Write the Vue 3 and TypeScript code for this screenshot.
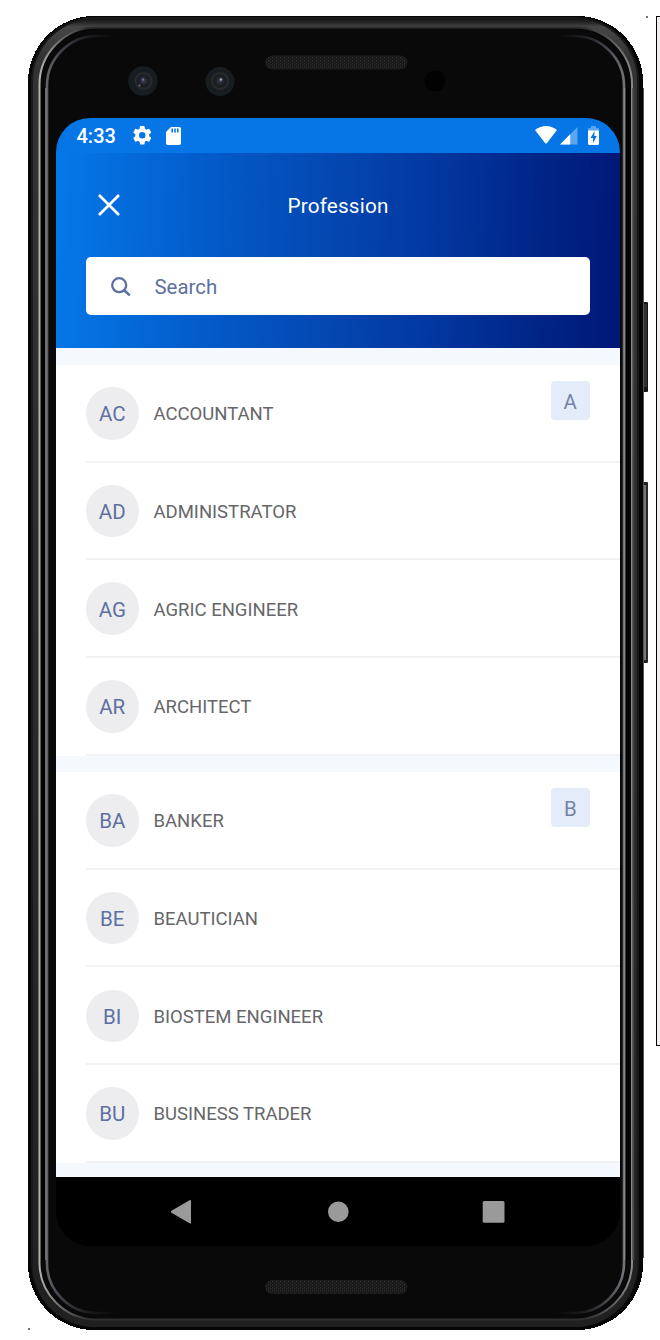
<script setup lang="ts">
interface Item { code: string; name: string }
interface Section { letter: string; items: Item[] }

const toItems = (names: string[]): Item[] => names.map((name) => ({ code: name.slice(0, 2), name }))

const sections: Section[] = [
  { letter: 'A', items: toItems(['ACCOUNTANT', 'ADMINISTRATOR', 'AGRIC ENGINEER', 'ARCHITECT']) },
  { letter: 'B', items: toItems(['BANKER', 'BEAUTICIAN', 'BIOSTEM ENGINEER', 'BUSINESS TRADER']) },
]
</script>

<template>
  <main class="stage">
    <svg class="device" width="660" height="1340" viewBox="0 0 660 1340" aria-hidden="true">
      <defs>
        <linearGradient id="outerGlow" gradientUnits="userSpaceOnUse" x1="39" y1="0" x2="633" y2="0">
          <stop offset="0" stop-color="#b4b4b2" /><stop offset="0.03" stop-color="#757573" /><stop offset="0.08" stop-color="#303030" />
          <stop offset="0.92" stop-color="#303030" /><stop offset="0.97" stop-color="#606060" /><stop offset="1" stop-color="#8c8c8c" />
        </linearGradient>
        <linearGradient id="innerGlow" gradientUnits="userSpaceOnUse" x1="45" y1="0" x2="626" y2="0">
          <stop offset="0" stop-color="#66666b" /><stop offset="0.03" stop-color="#404048" /><stop offset="0.07" stop-color="#1e1e23" /><stop offset="0.12" stop-color="#090909" />
          <stop offset="0.88" stop-color="#090909" /><stop offset="0.93" stop-color="#1e1e23" /><stop offset="0.97" stop-color="#484850" /><stop offset="1" stop-color="#77777c" />
        </linearGradient>
        <radialGradient id="lens">
          <stop offset="0" stop-color="#45465a" /><stop offset="0.25" stop-color="#292b36" /><stop offset="0.6" stop-color="#1a1b1e" />
          <stop offset="0.85" stop-color="#2b2d2f" /><stop offset="1" stop-color="#171b1f" />
        </radialGradient>
        <linearGradient id="rail" x1="0" y1="0" x2="0" y2="1">
          <stop offset="0" stop-color="#151515" /><stop offset="0.003" stop-color="#292929" /><stop offset="0.006" stop-color="#464646" />
          <stop offset="0.03" stop-color="#333" /><stop offset="0.5" stop-color="#2b2b2b" /><stop offset="1" stop-color="#202020" />
        </linearGradient>
        <pattern id="mesh" width="4" height="3" patternUnits="userSpaceOnUse">
          <rect width="4" height="3" fill="#151515" /><rect x="0" width="1.2" height="1.4" fill="#343434" />
          <rect x="2" y="1.4" width="1.2" height="1.4" fill="#303030" />
        </pattern>
      </defs>

      <rect x="656" y="16" width="4" height="1030" fill="#000" />
      <rect x="657" y="17" width="3" height="1028" fill="#f2f0f0" />
      <rect x="646" y="16" width="2" height="2" fill="#777" />
      <rect x="28" y="1328" width="2" height="2" fill="#777" />

      <rect x="641" y="302" width="7" height="90" rx="1" fill="#151515" />
      <rect x="643" y="304" width="4" height="83" fill="#303030" />
      <rect x="641" y="482" width="7" height="181" rx="1" fill="#202020" />
      <rect x="644" y="485" width="2" height="175" fill="#777" />
      <rect x="646.5" y="484" width="1" height="178" fill="#333" />

      <g shape-rendering="crispEdges"><rect x="28" y="16" width="615" height="1314" rx="66" fill="#060606" /></g>
      <path d="M643.5 88V1258" stroke="#555" stroke-width="1" />
      <rect x="31" y="17" width="608" height="1310" rx="64" fill="#181818" />
      <rect x="33" y="19" width="604" height="1308" rx="62" fill="url(#rail)" />
      <rect x="39.5" y="27.5" width="592.5" height="1292" rx="57" fill="#060606" stroke="url(#outerGlow)" stroke-width="2" />
      <rect x="41" y="29" width="589.5" height="1289" rx="56" fill="#090909" />
      <path d="M43 88V1260M627.5 88V1260" stroke="#020202" stroke-width="3" />
      <rect x="47" y="36" width="577" height="1277" rx="50" fill="#090909" stroke="url(#innerGlow)" stroke-width="2.600" />
      <path d="M45.800 88V1260M624.700 88V1260" stroke="#8c8c91" stroke-width="1" />
      <path d="M633.300 88V1260" stroke="#444" stroke-width="2" />

      <circle cx="143" cy="81" r="14.700" fill="#171d21" />
      <circle cx="143.500" cy="81" r="9.500" fill="url(#lens)" />
      <circle cx="143" cy="79.500" r="1.200" fill="#6f7194" /><circle cx="139.500" cy="85.500" r="1" fill="#777064" />
      <circle cx="220" cy="81.500" r="14.500" fill="#171d21" />
      <circle cx="220" cy="81" r="9.500" fill="url(#lens)" />
      <circle cx="221" cy="79.500" r="1.300" fill="#a0a3ac" />
      <circle cx="435" cy="81" r="10.500" fill="#020203" />
      <rect x="265.500" y="56" width="141.500" height="13" rx="6.500" fill="url(#mesh)" stroke="#1c1c1c" />
      <rect x="265.500" y="1280.500" width="141.500" height="13" rx="6.500" fill="url(#mesh)" stroke="#1c1c1c" />
    </svg>

    <div class="screen">
      <div class="status">
        <span class="clock">4:33</span>
        <svg class="gear" width="18.500" height="18.500" viewBox="2 2 20 20"><path fill="#fff" d="M19.43 12.98a7.8 7.8 0 0 0 0-1.96l2.11-1.65c.19-.15.24-.42.12-.64l-2-3.46c-.12-.22-.39-.3-.61-.22l-2.49 1a7.300 7.300 0 0 0-1.690-.98l-.38-2.650A.490.490 0 0 0 14 2h-4c-.25 0-.46.180-.49.420l-.38 2.650c-.61.250-1.170.590-1.690.980l-2.490-1c-.230-.090-.490 0-.610.220l-2 3.460c-.130.220-.070.490.120.640l2.110 1.650a7.900 7.900 0 0 0 0 1.960l-2.110 1.650c-.190.150-.240.420-.120.640l2 3.460c.120.220.390.300.610.220l2.490-1c.520.400 1.080.730 1.690.980l.380 2.650c.030.240.240.420.490.420h4c.250 0 .460-.180.490-.420l.380-2.650c.610-.250 1.170-.590 1.690-.980l2.490 1c.230.090.490 0 .610-.220l2-3.460c.120-.220.070-.490-.120-.640zM12 15.500a3.500 3.500 0 1 1 0-7 3.500 3.500 0 0 1 0 7z" /></svg>
        <svg class="card" width="15" height="18" viewBox="0 0 15 18"><path fill="#fff" d="M5 0H13.200Q15 0 15 1.800V16.200Q15 18 13.200 18H1.800Q0 18 0 16.200V5Z" /><path d="M6.200 1.500V5.500M9 1.500V5.500M11.800 1.500V5.500" stroke="#0675e6" stroke-width="1.600" /></svg>
        <span class="spacer"></span>
        <svg class="wifi" width="22" height="18" viewBox="0 0 22 18"><path fill="#fff" d="M0 4Q11 -4 22 4L12 17Q11 18 10 17Z" /></svg>
        <svg class="signal" width="17.500" height="17.500" viewBox="0 0 18 18"><path fill="#fff" fill-opacity=".35" d="M18 0V18H0Z" /><path fill="#fff" d="M10.500 7.500V18H0Z" /></svg>
        <svg class="battery" width="11" height="19" viewBox="0 0 11 19"><path fill="#fff" fill-opacity=".35" d="M0 5V3Q0 2 1 2H3V0H8V2H10Q11 2 11 3V5Z" /><path fill="#fff" d="M0 4.500H11V17.500Q11 19 9.500 19H1.500Q0 19 0 17.500Z" /><path fill="#0675e6" d="M6.600 5L2.500 12H5V17L8.800 10H6.300Z" /></svg>
      </div>

      <header class="header">
        <div class="titlebar">
          <svg width="22" height="22" viewBox="0 0 22 22"><path d="M1 1L21 21M21 1L1 21" stroke="#fff" stroke-width="2.700" /></svg>
          <h1>Profession</h1>
        </div>
        <label class="search">
          <svg width="20" height="20" viewBox="0 0 20 20" fill="none" stroke="#5d70a0" stroke-width="2.300"><circle cx="8.200" cy="8.200" r="7" /><path d="M13.200 13.200L18.800 18.400" stroke-width="2.600" /></svg>
          <span>Search</span>
        </label>
      </header>

      <div class="list">
        <section v-for="section in sections" :key="section.letter" class="section">
          <div v-for="item in section.items" :key="item.name" class="row">
            <span class="avatar">{{ item.code }}</span>
            <span class="name">{{ item.name }}</span>
          </div>
          <span class="letter">{{ section.letter }}</span>
        </section>
      </div>

      <nav class="nav">
        <svg width="564" height="69" viewBox="0 0 564 69" fill="#9a9a9a"><path d="M115 34.500Q115 34 115.500 33.700L133.500 23.300Q135 22.500 135 24V45.500Q135 47 133.500 46.200L115.500 35.700Q115 35.300 115 34.500Z" /><circle cx="282.300" cy="34.700" r="10.300" /><rect x="426.700" y="24" width="21.800" height="21.800" rx="1.500" /></svg>
      </nav>
    </div>
  </main>
</template>

<style>
body { background: #fff; }
</style>

<style scoped>
.stage { position: relative; box-sizing: border-box; width: 660px; height: 1340px; padding: 118px 40px 94px 56px; overflow: hidden; font-family: Roboto, "Liberation Sans", sans-serif; }
.device { position: absolute; inset: 0; }
.screen { position: relative; display: flex; flex-direction: column; width: 564px; height: 1128px; border-radius: 34px; overflow: hidden; }
svg { display: block; flex: none; }
.status { display: flex; align-items: center; box-sizing: border-box; height: 34.500px; flex: none; padding: 0 21px 0 20.500px; background: #0676e7; color: #fff; }
.clock { width: 56px; font-size: 20px; font-weight: 500; line-height: 34px; padding-top: 2px; }
.gear { margin-top: 0; }
.card { margin-left: 15px; margin-top: 1px; }
.spacer { flex: 1; }
.signal { margin-left: 3px; margin-top: 1px; }
.battery { margin-left: 10.500px; margin-top: 1px; }
.header { box-sizing: border-box; height: 195.500px; flex: none; padding: 30px 30px 0; background: linear-gradient(92deg, #0578e9 0%, #0359c7 29%, #0446b0 50%, #02369f 68%, #002486 86%, #001777 100%); }
.titlebar { display: grid; grid-template-columns: 46px 1fr 46px; align-items: center; height: 44px; }
.titlebar svg { margin-left: 12px; }
h1 { margin: 0; text-align: center; color: #fff; font-size: 20.700px; line-height: 24px; font-weight: 400; padding-top: 2px; letter-spacing: .2px; }
.search { display: flex; align-items: center; height: 58px; margin-top: 30.500px; border-radius: 5px; background: #fff; color: #5d70a0; font-size: 20.400px; }
.search svg { margin-left: 24.500px; margin-top: 1px; }
.search span { margin-left: 24px; padding-top: 2px; }
.list { display: flex; flex-direction: column; gap: 16.300px; flex: 1; padding-top: 17px; min-height: 0; background: #f5f8fc; }
.section { position: relative; background: #fff; }
.row { display: flex; align-items: center; box-sizing: border-box; height: 97.700px; margin-left: 30px; border-bottom: 2px solid #f1f2f3; }
.avatar { display: flex; align-items: center; justify-content: center; box-sizing: border-box; width: 52.500px; height: 52.500px; margin-top: 1px; padding-top: 2px; border-radius: 50%; background: #ededf0; color: #5d70a0; font-size: 20.500px; }
.name { margin-left: 15px; padding-top: 3px; color: #666669; font-size: 18.500px; }
.letter { position: absolute; top: 15.500px; right: 30px; display: flex; align-items: center; justify-content: center; box-sizing: border-box; width: 39.500px; height: 39.500px; padding-top: 3px; border-radius: 4px; background: #e4ecf9; color: #7583a7; font-size: 20.400px; }
.nav { flex: none; height: 69px; background: #000; }
</style>
